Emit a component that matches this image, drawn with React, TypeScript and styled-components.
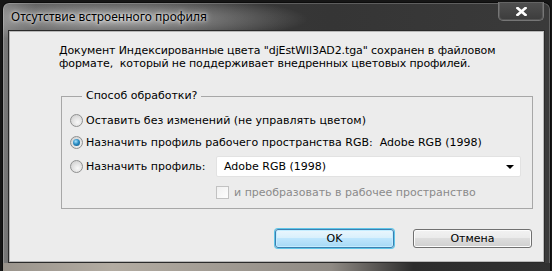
import React from 'react';
import styled, { createGlobalStyle } from 'styled-components';

const GlobalStyle = createGlobalStyle`
  html, body {
    margin: 0;
    padding: 0;
    background: #161616;
  }
  body {
    width: 552px;
    height: 271px;
    overflow: hidden;
    font-family: "DejaVu Sans", "Liberation Sans", sans-serif;
  }
`;

const Window = styled.div`
  box-sizing: border-box;
  margin: 2px 1px 0 2px;
  height: 269px;
  border: 1px solid #0c0c0c;
  border-bottom: none;
  border-radius: 7px 7px 0 0;
  display: flex;
  flex-direction: column;
  background:
    radial-gradient(ellipse 190px 24px at 115px 16px, rgba(200, 200, 200, 0.8), rgba(120, 120, 120, 0) 100%),
    linear-gradient(to right, #7a7a7a 0%, #4a4a4a 6%, #3b3b3b 20%, #353535 60%, #3a3a3a 100%);
  box-shadow: inset 0 0 0 1px rgba(255, 255, 255, 0.2);
`;

const TitleBar = styled.div`
  height: 28px;
  display: flex;
  align-items: flex-start;
  justify-content: space-between;
  padding: 0 6px 0 8px;
`;

const Title = styled.div`
  margin-top: 6px;
  font-family: "Noto Sans", "DejaVu Sans", sans-serif;
  font-size: 12px;
  line-height: 16px;
  color: #000;
  text-shadow: 0 0 6px rgba(255, 255, 255, 0.9), 0 0 3px rgba(255, 255, 255, 0.8);
`;

const CloseButton = styled.div`
  box-sizing: border-box;
  width: 46px;
  height: 19px;
  margin-top: -1px;
  border: 1px solid #767676;
  border-top: none;
  border-radius: 0 0 5px 5px;
  background: linear-gradient(to bottom, #505050, #3c3c3c);
  box-shadow: inset 0 0 0 1px rgba(255, 255, 255, 0.12);
  display: flex;
  align-items: center;
  justify-content: center;
`;

const Client = styled.div`
  box-sizing: border-box;
  margin: 0 6px 0 6px;
  height: 231px;
  background: #ececec;
  border: 1px solid #b8b8b8;
  outline: 1px solid #2a2a2a;
  display: flex;
  flex-direction: column;
  font-size: 11px;
  color: #000;
`;

const Message = styled.p`
  margin: 12px 0 0 49px;
  line-height: 13px;
  letter-spacing: -0.1px;
`;

const Group = styled.fieldset`
  box-sizing: border-box;
  margin: 19px 10px 0 51px;
  padding: 0 11px 9px 8px;
  border: 1px solid #a7a7a7;
  min-width: 0;
  display: flex;
  flex-direction: column;
`;

const Legend = styled.legend`
  padding: 0 4px;
  margin-left: 12px;
  line-height: 14px;
`;

const OptionRow = styled.div<{ $top: number }>`
  display: grid;
  grid-template-columns: 146px 1fr;
  align-items: center;
  margin-top: ${p => p.$top}px;
  min-height: 18px;
`;

const RadioLabel = styled.label`
  display: flex;
  align-items: center;
  gap: 3px;
  white-space: nowrap;
`;

const Radio = styled.span<{ $checked?: boolean }>`
  box-sizing: border-box;
  width: 13px;
  height: 13px;
  border-radius: 50%;
  border: 1px solid #8f9090;
  background: radial-gradient(circle at 60% 65%, #f8f8f8 0%, #dcdcdc 60%, #c8c8c8 100%);
  display: flex;
  align-items: center;
  justify-content: center;
  flex: none;
  &::after {
    content: '';
    display: ${p => (p.$checked ? 'block' : 'none')};
    width: 7px;
    height: 7px;
    border-radius: 50%;
    background: radial-gradient(circle at 40% 35%, #a9e3ff 0%, #2b8dc3 45%, #0e4f7d 100%);
  }
`;

const Select = styled.div`
  box-sizing: border-box;
  height: 21px;
  background: #fff;
  border: 1px solid #e2e2e2;
  border-radius: 2px;
  display: flex;
  align-items: center;
  justify-content: space-between;
  padding: 0 6px 0 7px;
`;

const Arrow = styled.span`
  width: 0;
  height: 0;
  border-left: 4px solid transparent;
  border-right: 4px solid transparent;
  border-top: 4px solid #000;
`;

const CheckRow = styled.label`
  margin: 9px 0 0 146px;
  display: flex;
  align-items: center;
  gap: 5px;
  color: #8a8a8a;
  line-height: 13px;
`;

const Checkbox = styled.span`
  box-sizing: border-box;
  width: 13px;
  height: 13px;
  border: 1px solid #c2c2c2;
  background: linear-gradient(135deg, #f0f0f0, #fdfdfd);
  flex: none;
`;

const ButtonBar = styled.div`
  display: flex;
  justify-content: flex-end;
  gap: 19px;
  margin: 20px 11px 0 0;
`;

const Button = styled.button<{ $primary?: boolean }>`
  box-sizing: border-box;
  width: 119px;
  height: 19px;
  padding: 0;
  font-family: inherit;
  font-size: 11px;
  color: #000;
  border-radius: 3px;
  border: 1px solid ${p => (p.$primary ? '#3c7fb1' : '#707070')};
  background: ${p =>
    p.$primary
      ? 'linear-gradient(to bottom, #eaf6fd 0%, #d9f0fc 45%, #bee6fd 50%, #a7d9f5 100%)'
      : 'linear-gradient(to bottom, #f2f2f2 0%, #ebebeb 45%, #dddddd 50%, #cfcfcf 100%)'};
  box-shadow: ${p => (p.$primary ? '0 0 0 1px #5fc6e8, inset 0 0 0 1px #c4edff' : 'inset 0 0 0 1px #fcfcfc')};
`;

const BottomFrame = styled.div`
  flex: 1;
  margin-top: 1px;
  background: linear-gradient(to right, #9a948c 0%, #b3aca2 20%, #8f8a84 60%, #2c2c2c 75%, #313131 100%);
`;

export default function App() {
  return (
    <>
      <GlobalStyle />
      <Window>
        <TitleBar>
          <Title>Отсутствие встроенного профиля</Title>
          <CloseButton>
            <svg width="11" height="9" viewBox="0 0 11 9">
              <path d="M1.5 1 L9.5 8 M9.5 1 L1.5 8" stroke="#fff" strokeWidth="2.6" strokeLinecap="square" />
            </svg>
          </CloseButton>
        </TitleBar>
        <Client>
          <Message>
            Документ Индексированные цвета "djEstWll3AD2.tga" сохранен в файловом
            <br />
            формате,&nbsp; который не поддерживает внедренных цветовых профилей.
          </Message>
          <Group>
            <Legend>Способ обработки?</Legend>
            <OptionRow $top={8}>
              <RadioLabel>
                <Radio />
                Оставить без изменений (не управлять цветом)
              </RadioLabel>
            </OptionRow>
            <OptionRow $top={4}>
              <RadioLabel>
                <Radio $checked />
                Назначить профиль рабочего пространства RGB:&nbsp; Adobe RGB (1998)
              </RadioLabel>
            </OptionRow>
            <OptionRow $top={5}>
              <RadioLabel>
                <Radio />
                Назначить профиль:
              </RadioLabel>
              <Select>
                <span>Adobe RGB (1998)</span>
                <Arrow />
              </Select>
            </OptionRow>
            <CheckRow>
              <Checkbox />
              и преобразовать в рабочее пространство
            </CheckRow>
          </Group>
          <ButtonBar>
            <Button $primary>OK</Button>
            <Button>Отмена</Button>
          </ButtonBar>
        </Client>
        <BottomFrame />
      </Window>
    </>
  );
}
